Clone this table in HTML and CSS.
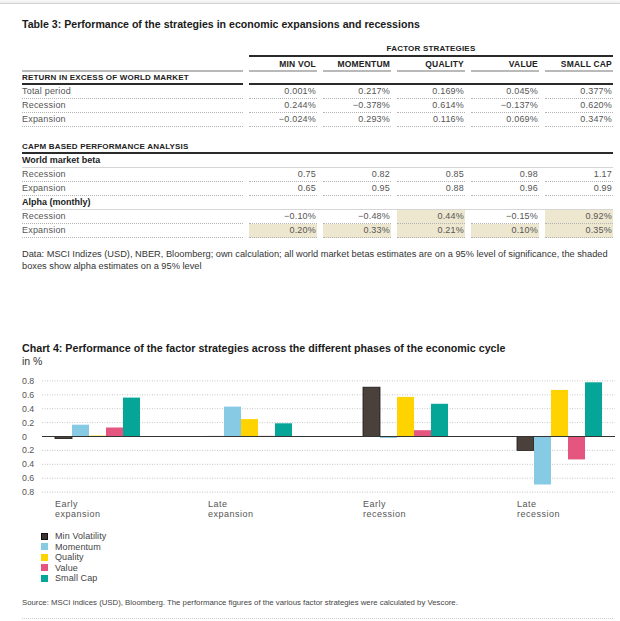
FILE: index.html
```html
<!DOCTYPE html>
<html lang="en">
<head>
<meta charset="utf-8">
<title>Factor strategies</title>
<link rel="stylesheet" href="styles.css">
</head>
<body>
<div class="topbar"></div>
<main class="page">
  <h1 class="title">Table 3: Performance of the strategies in economic expansions and recessions</h1>
  <div class="tbl">
    <div class="c blank"></div>
    <div class="c grp">FACTOR STRATEGIES</div>

    <div class="c colh"></div>
    <div class="c colh num">MIN VOL</div>
    <div class="c colh num">MOMENTUM</div>
    <div class="c colh num">QUALITY</div>
    <div class="c colh num">VALUE</div>
    <div class="c colh num">SMALL CAP</div>

    <div class="c sec">RETURN IN EXCESS OF WORLD MARKET</div>
    <div class="c sec span5"></div>

    <div class="c row">Total period</div>
    <div class="c row num">0.001%</div>
    <div class="c row num">0.217%</div>
    <div class="c row num">0.169%</div>
    <div class="c row num">0.045%</div>
    <div class="c row num">0.377%</div>

    <div class="c row">Recession</div>
    <div class="c row num">0.244%</div>
    <div class="c row num">&minus;0.378%</div>
    <div class="c row num">0.614%</div>
    <div class="c row num">&minus;0.137%</div>
    <div class="c row num">0.620%</div>

    <div class="c row">Expansion</div>
    <div class="c row num">&minus;0.024%</div>
    <div class="c row num">0.293%</div>
    <div class="c row num">0.116%</div>
    <div class="c row num">0.069%</div>
    <div class="c row num">0.347%</div>

    <div class="c sec full capm">CAPM BASED PERFORMANCE ANALYSIS</div>
    <div class="c sub full">World market beta</div>

    <div class="c row">Recession</div>
    <div class="c row num">0.75</div>
    <div class="c row num">0.82</div>
    <div class="c row num">0.85</div>
    <div class="c row num">0.98</div>
    <div class="c row num">1.17</div>

    <div class="c row">Expansion</div>
    <div class="c row num">0.65</div>
    <div class="c row num">0.95</div>
    <div class="c row num">0.88</div>
    <div class="c row num">0.96</div>
    <div class="c row num">0.99</div>

    <div class="c sub full">Alpha (monthly)</div>

    <div class="c row">Recession</div>
    <div class="c row num">&minus;0.10%</div>
    <div class="c row num">&minus;0.48%</div>
    <div class="c row num shaded">0.44%</div>
    <div class="c row num">&minus;0.15%</div>
    <div class="c row num shaded">0.92%</div>

    <div class="c row">Expansion</div>
    <div class="c row num shaded">0.20%</div>
    <div class="c row num shaded">0.33%</div>
    <div class="c row num shaded">0.21%</div>
    <div class="c row num shaded">0.10%</div>
    <div class="c row num shaded">0.35%</div>
  </div>

  <p class="note">Data: MSCI Indizes (USD), NBER, Bloomberg; own calculation; all world market betas estimates are on a 95% level of significance, the shaded<br>boxes show alpha estimates on a 95% level</p>

  <h2 class="title chart-title">Chart 4: Performance of the factor strategies across the different phases of the economic cycle</h2>
  <div class="unit">in %</div>

  <svg class="chart" width="598" height="150" viewBox="0 0 598 150" xmlns="http://www.w3.org/2000/svg">
    <g class="grid">
      <line x1="20" x2="593" y1="10.9" y2="10.9"/>
      <line x1="20" x2="593" y1="24.8" y2="24.8"/>
      <line x1="20" x2="593" y1="38.7" y2="38.7"/>
      <line x1="20" x2="593" y1="52.6" y2="52.6"/>
      <line x1="20" x2="593" y1="80.4" y2="80.4"/>
      <line x1="20" x2="593" y1="94.3" y2="94.3"/>
      <line x1="20" x2="593" y1="108.2" y2="108.2"/>
      <line x1="20" x2="593" y1="122.1" y2="122.1"/>
    </g>
    <g class="ylab">
      <text x="0" y="10.9">0.8</text>
      <text x="0" y="24.8">0.6</text>
      <text x="0" y="38.7">0.4</text>
      <text x="0" y="52.6">0.2</text>
      <text x="0" y="66.5">0</text>
      <text x="0" y="80.4">0.2</text>
      <text x="0" y="94.3">0.4</text>
      <text x="0" y="108.2">0.6</text>
      <text x="0" y="122.1">0.8</text>
    </g>
    <!-- Early expansion -->
    <rect class="b-mv" x="33" y="66.5" width="17" height="2.1"/>
    <rect class="b-mo" x="50" y="54.7" width="17" height="11.8"/>
    <rect class="b-qu" x="67" y="65.6" width="17" height="0.9"/>
    <rect class="b-va" x="84" y="57.5" width="17" height="9"/>
    <rect class="b-sc" x="101" y="27.6" width="17" height="38.9"/>
    <!-- Late expansion -->
    <rect class="b-tiny" x="185" y="65.8" width="17" height="0.7"/>
    <rect class="b-mo" x="202" y="36.6" width="17" height="29.9"/>
    <rect class="b-qu" x="219" y="49.1" width="17" height="17.4"/>
    <rect class="b-va" x="236" y="65.7" width="17" height="0.8" opacity="0.5"/>
    <rect class="b-sc" x="253" y="53.3" width="17" height="13.2"/>
    <!-- Early recession -->
    <rect class="b-mv" x="341" y="17.2" width="17" height="49.3"/>
    <rect class="b-mo" x="358" y="66.5" width="17" height="1.5"/>
    <rect class="b-qu" x="375" y="26.9" width="17" height="39.6"/>
    <rect class="b-va" x="392" y="60.2" width="17" height="6.3"/>
    <rect class="b-sc" x="409" y="33.8" width="17" height="32.7"/>
    <!-- Late recession -->
    <rect class="b-mv" x="495" y="66.5" width="17" height="13.9"/>
    <rect class="b-mo" x="512" y="66.5" width="17" height="48"/>
    <rect class="b-qu" x="529" y="19.9" width="17" height="46.6"/>
    <rect class="b-va" x="546" y="66.5" width="17" height="22.9"/>
    <rect class="b-sc" x="563" y="12.3" width="17" height="54.2"/>

    <line class="zero" x1="20" x2="593" y1="66.5" y2="66.5"/>

    <g class="xlab">
      <text x="33" y="134">Early</text>
      <text x="33" y="144">expansion</text>
      <text x="186" y="134">Late</text>
      <text x="186" y="144">expansion</text>
      <text x="341" y="134">Early</text>
      <text x="341" y="144">recession</text>
      <text x="495" y="134">Late</text>
      <text x="495" y="144">recession</text>
    </g>
  </svg>

  <ul class="legend">
    <li><span class="sw sw-mv"></span>Min Volatility</li>
    <li><span class="sw sw-mo"></span>Momentum</li>
    <li><span class="sw sw-qu"></span>Quality</li>
    <li><span class="sw sw-va"></span>Value</li>
    <li><span class="sw sw-sc"></span>Small Cap</li>
  </ul>

  <p class="source">Source: MSCI indices (USD), Bloomberg. The performance figures of the various factor strategies were calculated by Vescore.</p>
  <div class="rule"></div>
</main>
</body>
</html>
```

FILE: styles.css
```css
* { box-sizing: border-box; }

html, body {
  margin: 0;
  padding: 0;
  background: #fff;
}

body {
  font-family: "Liberation Sans", Arial, sans-serif;
  color: #333;
  width: 620px;
  overflow: hidden;
}

.topbar {
  height: 4px;
  background: linear-gradient(#fbfbfb, #ececec);
  border-bottom: 1px solid #d4d4d4;
}

.page {
  padding: 0 7px 0 22px;
}

.title {
  margin: 13px 0 0;
  font-size: 10.6px;
  line-height: 14px;
  font-weight: bold;
  color: #1b1b1b;
  white-space: nowrap;
}

/* ---------- table ---------- */
.tbl {
  margin-top: 12px;
  width: 591px;
  display: grid;
  grid-template-columns: 221px repeat(5, 1fr);
  column-gap: 6px;
}

.c {
  white-space: nowrap;
}

.num {
  text-align: right;
  padding-right: 1px;
}

.blank {
  height: 14px;
}

.grp {
  grid-column: 2 / -1;
  text-align: center;
  font-size: 8px;
  letter-spacing: 0.2px;
  font-weight: bold;
  color: #222;
  line-height: 12px;
  height: 14px;
  border-bottom: 2px solid #2a2a2a;
}

.colh {
  font-size: 8.5px;
  letter-spacing: 0.2px;
  font-weight: bold;
  color: #222;
  padding-top: 1px;
  line-height: 12px;
  height: 15px;
  border-bottom: 2px solid #b9b9b9;
}

.sec {
  font-size: 8px;
  letter-spacing: 0.2px;
  font-weight: bold;
  color: #222;
  line-height: 11px;
  height: 13px;
  border-bottom: 2px solid #2a2a2a;
}

.span5 {
  grid-column: 2 / -1;
}

.full {
  grid-column: 1 / -1;
}

.capm {
  margin-top: 14px;
}

.sub {
  font-size: 9px;
  font-weight: bold;
  color: #222;
  line-height: 13px;
  height: 14px;
  border-bottom: 1px solid #d6d6d6;
}

.row {
  font-size: 9px;
  letter-spacing: 0.2px;
  color: #555;
  line-height: 13px;
  height: 14px;
  border-bottom: 1px dotted #b3b3b3;
}

.shaded {
  background: #eee7cf;
}

.note {
  margin: 10px 0 0;
  font-size: 9.25px;
  line-height: 12px;
  color: #333;
  white-space: nowrap;
}

/* ---------- chart ---------- */
.chart-title {
  margin-top: 70px;
  font-size: 10.7px;
  line-height: 13px;
}

.unit {
  font-size: 10.5px;
  line-height: 13px;
  color: #333;
}

.chart {
  display: block;
  margin-top: 2px;
  overflow: visible;
}

.grid line {
  stroke: #b8b8b8;
  stroke-width: 0.8;
  stroke-dasharray: 1 1.5;
}

.zero {
  stroke: #333;
  stroke-width: 1;
}

.ylab text {
  font-family: "Liberation Sans", Arial, sans-serif;
  font-size: 8.8px;
  fill: #555;
  dominant-baseline: central;
}

.xlab text {
  font-family: "Liberation Sans", Arial, sans-serif;
  font-size: 9px;
  letter-spacing: 0.5px;
  fill: #555;
  dominant-baseline: central;
}

.b-mv { fill: #4a403c; stroke: #1c1816; stroke-width: 0.8; }
.b-mo { fill: #86cae3; }
.b-qu { fill: #ffd300; }
.b-va { fill: #e4557f; }
.b-sc { fill: #05a597; }
.b-tiny { fill: #d9c4c4; }

/* ---------- legend ---------- */
.legend {
  list-style: none;
  margin: 11px 0 0;
  padding: 0 0 0 19px;
}

.legend li {
  display: flex;
  align-items: center;
  gap: 7px;
  font-size: 9px;
  letter-spacing: 0.1px;
  line-height: 10.5px;
  color: #444;
}

.sw {
  width: 7px;
  height: 7px;
  flex: none;
}

.sw-mv { background: #3d3431; border: 1px solid #111; }
.sw-mo { background: #86cae3; }
.sw-qu { background: #ffd300; }
.sw-va { background: #e4557f; }
.sw-sc { background: #05a597; }

.source {
  margin: 14px 0 0;
  font-size: 7.8px;
  line-height: 10px;
  color: #444;
  white-space: nowrap;
}

.rule {
  margin-top: 10px;
  width: 591px;
  border-top: 1px dotted #cfcfcf;
}
```
